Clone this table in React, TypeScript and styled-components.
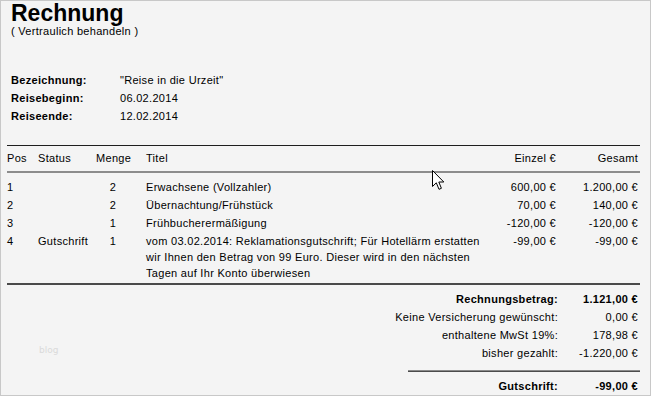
import styled, { createGlobalStyle } from "styled-components";

const GlobalStyle = createGlobalStyle`
  html, body {
    margin: 0;
    padding: 0;
    background: #f4f4f4;
  }
  body {
    font-family: "Liberation Sans", Arial, sans-serif;
    color: #000;
  }
`;

type Align = "left" | "center" | "right";

const positions = [
  { pos: "1", status: "", menge: "2", titel: ["Erwachsene (Vollzahler)"], einzel: "600,00 €", gesamt: "1.200,00 €" },
  { pos: "2", status: "", menge: "2", titel: ["Übernachtung/Frühstück"], einzel: "70,00 €", gesamt: "140,00 €" },
  { pos: "3", status: "", menge: "1", titel: ["Frühbucherermäßigung"], einzel: "-120,00 €", gesamt: "-120,00 €" },
  {
    pos: "4",
    status: "Gutschrift",
    menge: "1",
    titel: [
      "vom 03.02.2014: Reklamationsgutschrift; Für Hotellärm erstatten",
      "wir Ihnen den Betrag von 99 Euro. Dieser wird in den nächsten",
      "Tagen auf Ihr Konto überwiesen",
    ],
    einzel: "-99,00 €",
    gesamt: "-99,00 €",
  },
];

const summary = [
  { label: "Rechnungsbetrag:", value: "1.121,00 €", bold: true },
  { label: "Keine Versicherung gewünscht:", value: "0,00 €", bold: false },
  { label: "enthaltene MwSt 19%:", value: "178,98 €", bold: false },
  { label: "bisher gezahlt:", value: "-1.220,00 €", bold: false },
];

function App() {
  return (
    <>
      <GlobalStyle />
      <StyledPage>
        <StyledHead>
          <h1>Rechnung</h1>
          <p>( Vertraulich behandeln )</p>
        </StyledHead>

        <StyledInfo>
          <dt>Bezeichnung:</dt>
          <dd>"Reise in die Urzeit"</dd>
          <dt>Reisebeginn:</dt>
          <dd>06.02.2014</dd>
          <dt>Reiseende:</dt>
          <dd>12.02.2014</dd>
        </StyledInfo>

        <StyledTable>
          <colgroup>
            <col style={{ width: 31 }} />
            <col style={{ width: 58 }} />
            <col style={{ width: 36 }} />
            <col />
            <col style={{ width: 81 }} />
            <col style={{ width: 82 }} />
          </colgroup>
          <thead>
            <tr>
              <StyledTh $align="left">Pos</StyledTh>
              <StyledTh $align="left">Status</StyledTh>
              <StyledTh $align="center">Menge</StyledTh>
              <StyledTh $align="left" $indent>Titel</StyledTh>
              <StyledTh $align="right">Einzel €</StyledTh>
              <StyledTh $align="right">Gesamt</StyledTh>
            </tr>
          </thead>
          <tbody>
            {positions.map((row) => (
              <tr key={row.pos}>
                <StyledTd $align="left">{row.pos}</StyledTd>
                <StyledTd $align="left">{row.status}</StyledTd>
                <StyledTd $align="center">{row.menge}</StyledTd>
                <StyledTd $align="left" $indent>
                  {row.titel.map((line) => (
                    <StyledLine key={line}>{line}</StyledLine>
                  ))}
                </StyledTd>
                <StyledTd $align="right">{row.einzel}</StyledTd>
                <StyledTd $align="right">{row.gesamt}</StyledTd>
              </tr>
            ))}
          </tbody>
        </StyledTable>

        <StyledSummary>
          {summary.map((item) => (
            <StyledSumRow key={item.label} $bold={item.bold}>
              <span>{item.label}</span>
              <span>{item.value}</span>
            </StyledSumRow>
          ))}
        </StyledSummary>

        <StyledRule />

        <StyledTotal>
          <StyledSumRow $bold>
            <span>Gutschrift:</span>
            <span>-99,00 €</span>
          </StyledSumRow>
        </StyledTotal>

        <StyledWatermark>blog</StyledWatermark>
        <StyledCursor width="13" height="21" viewBox="0 0 13 21">
          <path
            d="M0.5 0.5 L0.5 16.5 L4.3 12.8 L7 19.3 L9.4 18.3 L6.8 12 L11.8 12 Z"
            fill="#fff"
            stroke="#000"
            strokeWidth="1"
            strokeLinejoin="round"
          />
        </StyledCursor>
      </StyledPage>
    </>
  );
}

export default App;

const StyledPage = styled.div`
  position: relative;
  box-sizing: border-box;
  width: 651px;
  height: 396px;
  padding: 0 10px 0 6px;
  border: 1px solid #c8c8c8;
  background: #f4f4f4;
  font-size: 11px;
  letter-spacing: 0.3px;
  overflow: hidden;
`;

const StyledHead = styled.header`
  padding-left: 4px;
  & > h1 {
    margin: 0;
    font-size: 23px;
    line-height: 24px;
    font-weight: 700;
    letter-spacing: 0;
  }
  & > p {
    margin: 0;
    font-size: 11px;
    line-height: 13px;
  }
`;

const StyledInfo = styled.dl`
  display: grid;
  grid-template-columns: 109px 1fr;
  grid-auto-rows: 18px;
  align-items: center;
  margin: 33px 0 20px;
  padding-left: 4px;
  & > dt {
    font-weight: 700;
  }
  & > dd {
    margin: 0;
  }
`;

const StyledTable = styled.table`
  width: 100%;
  table-layout: fixed;
  border-collapse: collapse;
  border-top: 1px solid #1e1e1e;
  border-bottom: 2px solid #4a4a4a;
  font-size: 11px;
  & thead tr {
    border-bottom: 2px solid #8c8c8c;
  }
  & tbody tr:first-child td {
    padding-top: 6px;
  }
  & tbody tr:last-child td {
    padding-bottom: 2px;
  }
`;

const StyledTh = styled.th<{ $align: Align; $indent?: boolean }>`
  padding: 4px 2px 5px ${({ $indent }) => ($indent ? "14px" : "0")};
  text-align: ${({ $align }) => $align};
  font-weight: 400;
  line-height: 16px;
  white-space: nowrap;
`;

const StyledTd = styled.td<{ $align: Align; $indent?: boolean }>`
  padding: 1px 2px 1px ${({ $indent }) => ($indent ? "14px" : "0")};
  text-align: ${({ $align }) => $align};
  vertical-align: top;
  line-height: 16px;
  white-space: nowrap;
`;

const StyledLine = styled.div`
  white-space: nowrap;
`;

const StyledSummary = styled.div`
  display: flex;
  flex-direction: column;
  align-items: flex-end;
  margin-top: 5px;
`;

const StyledSumRow = styled.div<{ $bold?: boolean }>`
  display: grid;
  grid-template-columns: auto 82px;
  padding: 1px 0;
  line-height: 16px;
  font-weight: ${({ $bold }) => ($bold ? 700 : 400)};
  & > span {
    text-align: right;
  }
  & > span:last-child {
    padding-right: 2px;
  }
`;

const StyledRule = styled.hr`
  width: 232px;
  margin: 8px 0 0 auto;
  border: 0;
  border-top: 1px solid #8a8a8a;
  border-bottom: 1px solid #4c4c4c;
`;

const StyledTotal = styled.div`
  display: flex;
  justify-content: flex-end;
  margin-top: 5px;
`;

const StyledWatermark = styled.span`
  position: absolute;
  left: 38px;
  top: 344px;
  font-family: "DejaVu Sans", sans-serif;
  font-size: 9px;
  letter-spacing: 0;
  color: #dadada;
`;

const StyledCursor = styled.svg`
  position: absolute;
  left: 431px;
  top: 169px;
`;
